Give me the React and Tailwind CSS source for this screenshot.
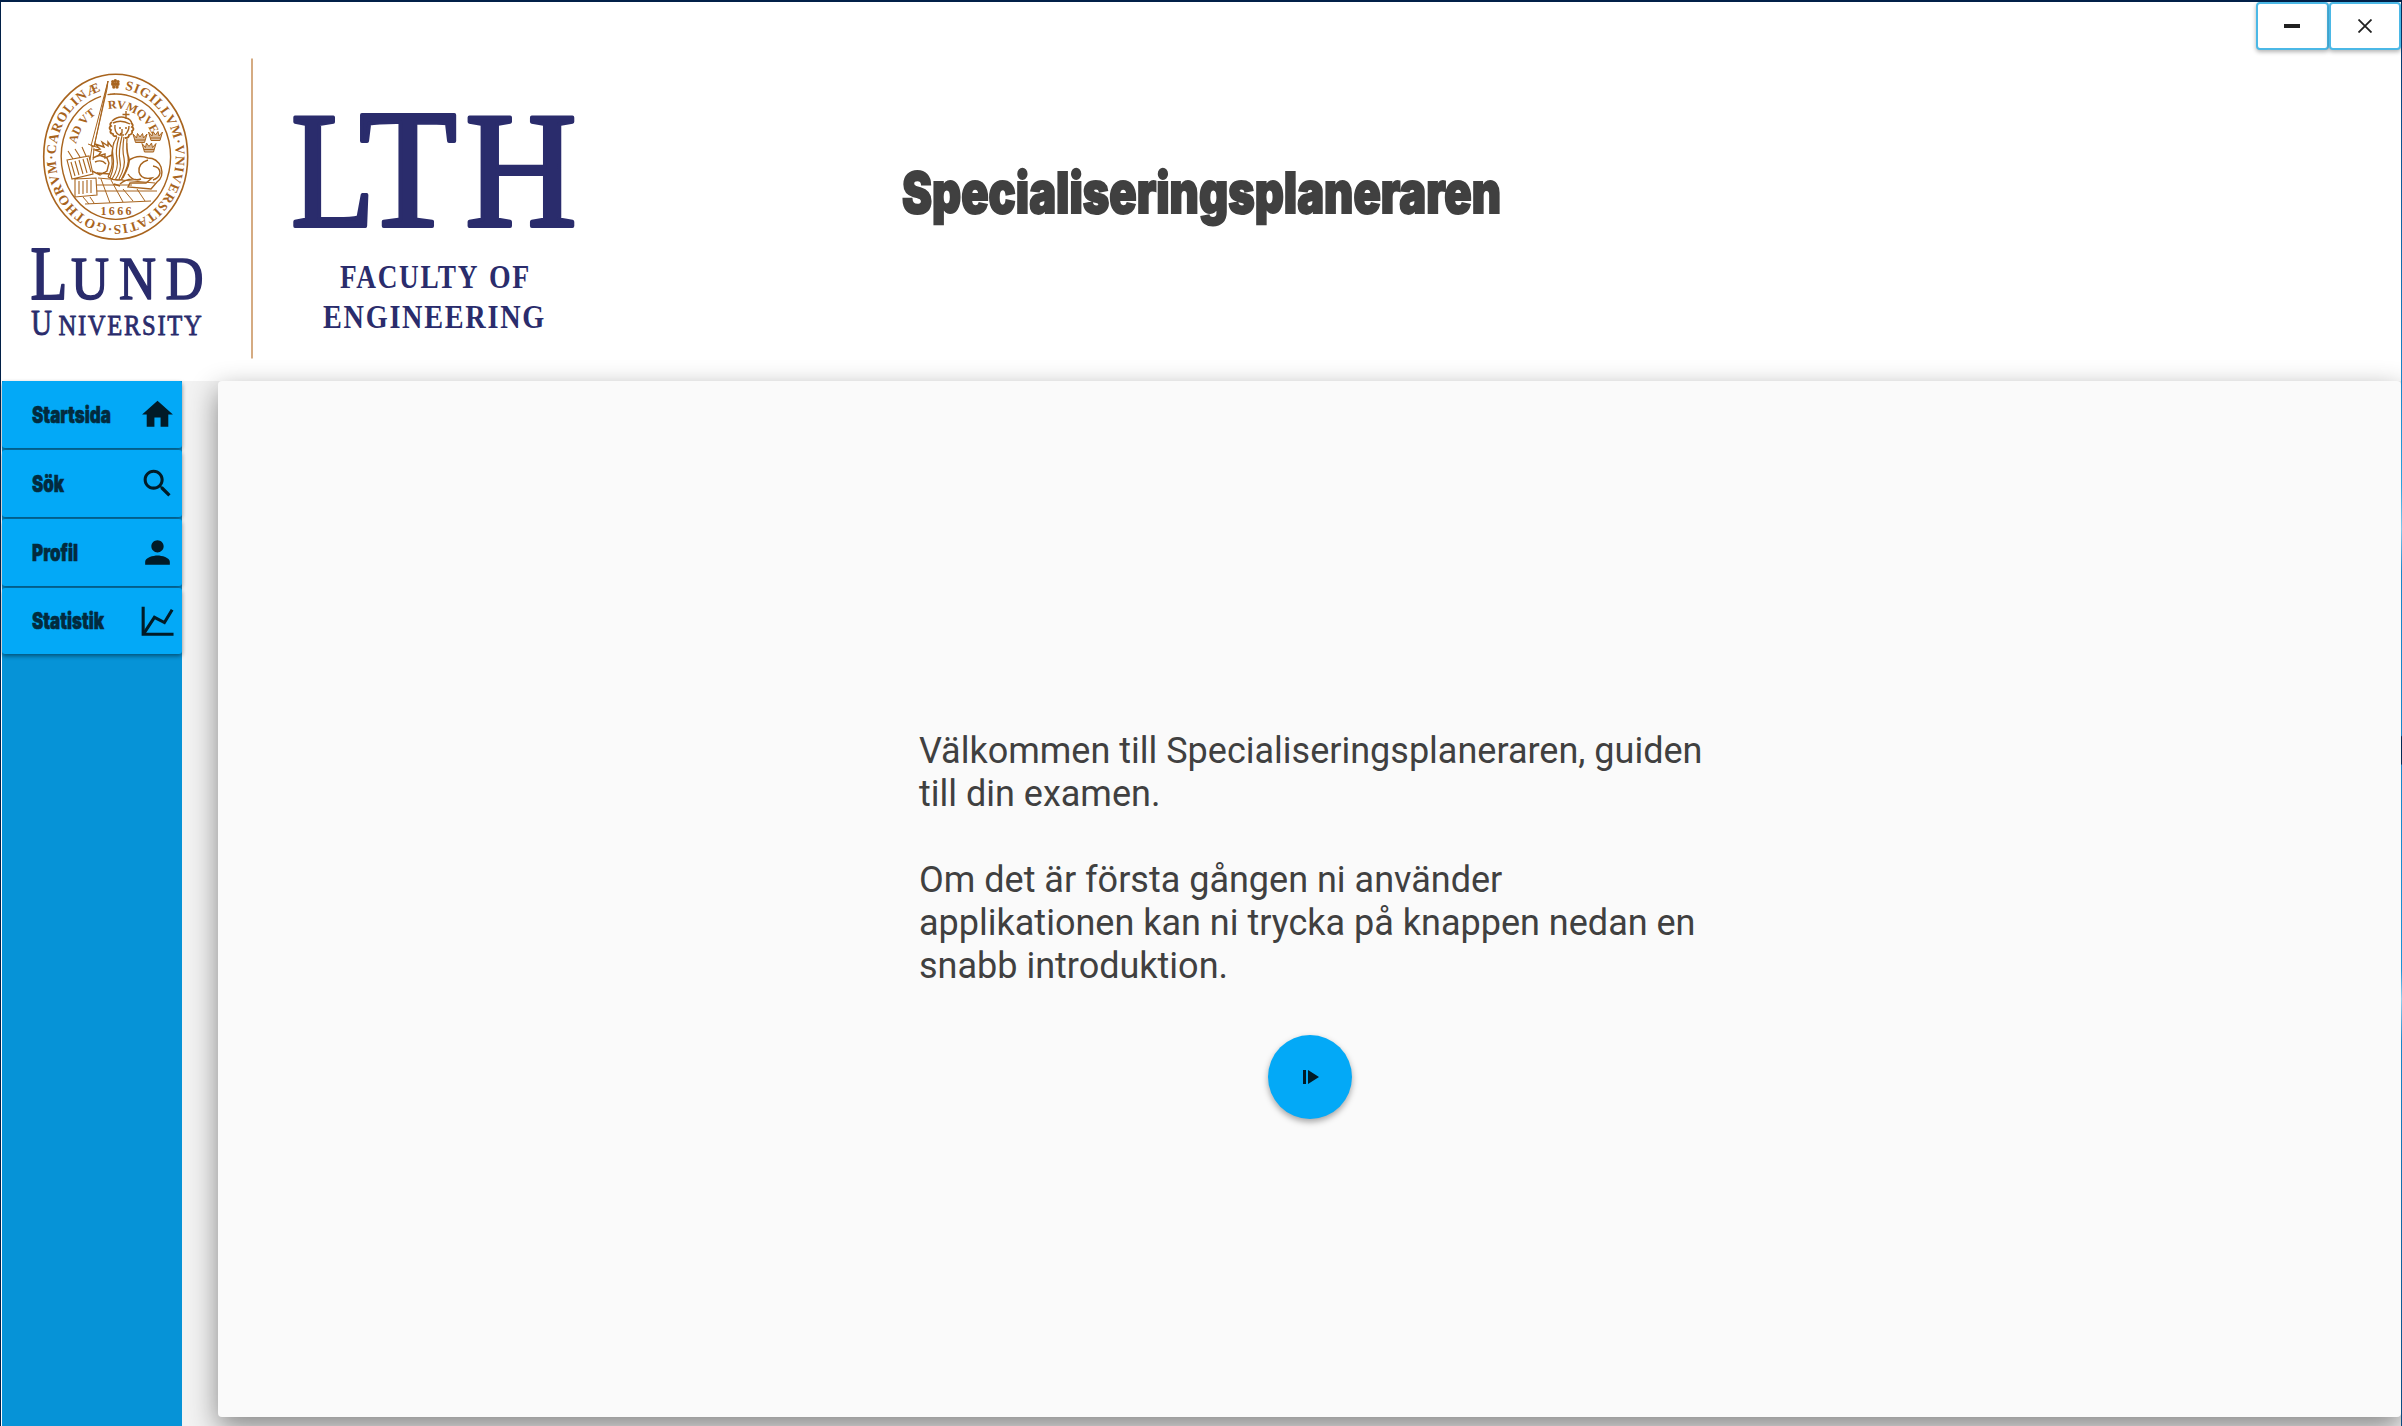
const NAV = [
  {
    label: "Startsida",
    width: 79,
    icon: <path d="M10 20v-6h4v6h5v-8h3L12 3 2 12h3v8z" />,
  },
  {
    label: "Sök",
    width: 32,
    icon: (
      <path d="M15.5 14h-.79l-.28-.27C15.41 12.59 16 11.11 16 9.5 16 5.91 13.09 3 9.5 3S3 5.91 3 9.5 5.91 16 9.5 16c1.61 0 3.09-.59 4.23-1.57l.27.28v.79l5 4.99L20.49 19l-4.99-5zm-6 0C7.01 14 5 11.99 5 9.5S7.01 5 9.5 5 14 7.01 14 9.5 11.99 14 9.5 14z" />
    ),
  },
  {
    label: "Profil",
    width: 46,
    icon: <path d="M12 12c2.21 0 4-1.79 4-4s-1.79-4-4-4-4 1.79-4 4 1.79 4 4 4zm0 2c-2.67 0-8 1.34-8 4v2h16v-2c0-2.66-5.33-4-8-4z" />,
  },
  {
    label: "Statistik",
    width: 72,
    icon: (
      <g fill="none" stroke="currentColor" strokeWidth="2">
        <path d="M2.700 2.500v17.800h19.700" />
        <path d="M3.300 19.500 10 9.300l6.500 3.400 5-8.300" />
      </g>
    ),
  },
];

/* Heavy condensed lettering, fitted to a given width. */
function Condensed({ text, width, size, height, baseline, stroke, color }) {
  return (
    <svg width={width + 4} height={height} className="block overflow-visible">
      <text
        x="0"
        y={baseline}
        textLength={width}
        lengthAdjust="spacingAndGlyphs"
        fontFamily="Inter, Roboto, sans-serif"
        fontWeight="900"
        fontSize={size}
        fill={color}
        stroke={color}
        strokeWidth={stroke}
      >
        {text}
      </text>
    </svg>
  );
}

function Fit({ x, y, w, size, children, stroke = 0, weight = 400, spacing = 0 }) {
  return (
    <text
      x={x}
      y={y}
      textLength={w}
      lengthAdjust="spacingAndGlyphs"
      letterSpacing={spacing}
      fontSize={size}
      fontWeight={weight}
      stroke="#2a2c6c"
      strokeWidth={stroke}
      strokeLinejoin="round"
    >
      {children}
    </text>
  );
}

function Crown({ x, y }) {
  return (
    <path
      transform={`translate(${x} ${y})`}
      d="M-7-4-4.500 4.500h9L7-4 3.500 0 2.500-4.500 0-1-2.500-4.500-3.500 0zM-5 2h10"
      fill="#a8641e"
      fillOpacity=".45"
    />
  );
}

function Seal() {
  return (
    <g fill="none" stroke="#a8641e" strokeWidth="1">
      <defs>
        <path id="outer" d="M115.700 89a60 68 0 0 1 0 136a60 68 0 0 1 0-136" />
        <path id="inner" d="M75.500 147A41 48 0 0 1 155.900 147" />
      </defs>
      <ellipse cx="115.700" cy="156.700" rx="72" ry="82.500" strokeWidth="1.600" />
      <path d="M101 96.300A54.700 62.700 0 1 0 110 94.300M107.500 94.600A54.700 62.700 0 0 1 115 94" strokeWidth="1.400" />
      <g stroke="none" fill="#a8641e" fontFamily="'Liberation Serif', serif" fontWeight="700">
        <text fontSize="13.500">
          <textPath href="#outer" startOffset="9" textLength="378" lengthAdjust="spacing">
            SIGILLVM·VNIVERSITATIS·GOTHORVM·CAROLINÆ
          </textPath>
        </text>
        <text fontSize="12">
          <textPath href="#inner" startOffset="3">AD VT</textPath>
        </text>
        <text fontSize="12">
          <textPath href="#inner" startOffset="53">RVMQVE</textPath>
        </text>
        <text x="100.500" y="215" fontSize="12" textLength="31">1666</text>
      </g>
      <g fill="#a8641e" stroke="none">
        <circle cx="115.300" cy="80.700" r="1.700" /><circle cx="112.900" cy="84" r="1.900" />
        <circle cx="117.800" cy="84" r="1.900" /><circle cx="113.800" cy="87" r="1.700" /><circle cx="115.300" cy="84" r="2" />
        <circle cx="117" cy="87" r="1.700" /><circle cx="112.700" cy="81.500" r="1.600" /><circle cx="118" cy="81.500" r="1.600" />
      </g>
      <path d="M108 81 91 146l3 1zM108 81l-1 8L94 147M88 144l11 4M92 147l-2 13M94 148l-1 12" strokeWidth="1" fill="#fff" />
      {/* crowned head with curled hair */}
      <path d="M126 111v8M122.500 114.500h7M112 121q7-6 14-3 5 1 6 6M113 123q8-4 17 1M115 125q-1 7 4 10M129 126q0 5-4 9M119 128h2M125 128h2M122 129v4l-2 1M119 135h5" strokeWidth="1.400" />
      <path d="M112 122q-3 2-1 4-3 2 0 4-2 3 2 4 0 3 4 2M131 123q3 2 1 4 3 2 0 4 1 3-3 4 0 3-4 3" strokeWidth="1.800" />
      <path d="M117 137q-6 9-4 19t-3 22M119 137q-4 13-2 22t-5 20M122 136q-4 16-2 25t-5 19M124 137q-2 13 0 21t-5 21M127 139q-1 11 1 18t-7 23M127 143q0 10 2 15t-6 20M114 142q-3 11-2 18t-4 17M108 177q7 5 15 2" strokeWidth="1.200" />
      {/* paws */}
      <path d="M112 147l-4-5 0 4-6-4 2 5-9-3 5 5-5 1 6 2-3 4 7-2 0 4 7-3M93 158l6-3 8 3 2 5-2 8-7 4-8-4M95 162q7-3 11 2M97 173l13 1" strokeWidth="1.400" />
      {/* body, hind leg and tail */}
      <path d="M128 161q9-7 20-3 9 0 13 9 3 10-4 15l-6 7-23-2 2-4 16 0 6-5q-11 2-13-6-1-9 9-12M128 174q5 8 13 5M153 166q7 1 7 7-1 5-7 7M120 184q8-7 18-4M114 184l6 2" strokeWidth="1.400" />
      {/* books */}
      <path d="M67 160l22-4 4 18-21 5zM71 162l4 14M75 161l4 14M79 160l4 14M83 159l4 14M87 158l4 14M68 151l5 8M75 149l5 8M82 147l4 9M75 179v18l22-2-1-17zM79 181v13M83 181v13M87 180v13M91 180v13" strokeWidth="1.100" />
      {/* tiled floor */}
      <path d="M98 178l57 5M97 191h60M85 204l66-3M83 197l6 7M90 197l4 6M101 179l9 24M111 180l12 22M123 189l10 12M137 189l8 12M97 185h35" />
      <g strokeWidth="1">
        <Crown x={140} y={138} />
        <Crown x={155.500} y={136} />
        <Crown x={149} y={147.500} />
      </g>
    </g>
  );
}

function Logo() {
  return (
    <svg width="600" height="378" viewBox="0 0 600 378" className="block shrink-0">
      <Seal />
      <g fill="#2a2c6c" fontFamily="'Liberation Serif', serif">
        <Fit x={30.500} y={299} w={37} size={77} stroke={2}>L</Fit>
        <Fit x={71} y={299} w={38} size={62} stroke={1.600}>U</Fit>
        <Fit x={119} y={299} w={37} size={62} stroke={1.600}>N</Fit>
        <Fit x={165.500} y={299} w={38} size={62} stroke={1.600}>D</Fit>
        <Fit x={31} y={334.500} w={21} size={36} stroke={0.800}>U</Fit>
        <Fit x={58.500} y={334.500} w={145} size={29} stroke={0.800} spacing={2}>NIVERSITY</Fit>
        <Fit x={291} y={226} w={84} size={165} stroke={4}>L</Fit>
        <Fit x={359} y={226} w={98} size={170} stroke={4}>T</Fit>
        <Fit x={465} y={226} w={112} size={165} stroke={4}>H</Fit>
        <Fit x={340} y={288} w={139} size={33} weight={700} spacing={2}>FACULTY</Fit>
        <Fit x={489} y={288} w={42} size={33} weight={700} spacing={2}>OF</Fit>
        <Fit x={323} y={328} w={223} size={33} weight={700} spacing={2}>ENGINEERING</Fit>
      </g>
      <rect x="251" y="58.500" width="2" height="300" fill="#d5ab82" />
    </svg>
  );
}

export default function App() {
  return (
    <div className="flex h-[1426px] w-[2402px] overflow-hidden border-t-2 border-l border-[#012048] bg-white font-[Roboto,sans-serif]">
      <div className="flex min-w-0 flex-1 flex-col">
        <header className="flex h-[379px] shrink-0">
          <div className="-mt-0.5 -ml-px w-[902px]"><Logo /></div>
          <h1 className="mt-[149px] w-[602px]">
            <Condensed text="Specialiseringsplaneraren" width={599} size={57} height={70} baseline={61.500} stroke={2} color="#404040" />
          </h1>
          <div className="ml-auto flex h-12">
            <button className="flex w-[72.5px] items-center justify-center rounded border-2 border-[#4bb8e6] bg-white shadow-[0_2px_4px_rgba(0,0,0,0.3)]">
              <span className="h-1 w-4 bg-[#212121]" />
            </button>
            <button className="flex w-[72.5px] items-center justify-center rounded border-2 border-[#4bb8e6] bg-white shadow-[0_2px_4px_rgba(0,0,0,0.3)]">
              <svg width="14" height="14" viewBox="0 0 14 14" stroke="#212121" strokeWidth="1.800"><path d="M.5.5l13 13M13.500.5l-13 13" /></svg>
            </button>
          </div>
        </header>
        <div className="flex min-h-0 flex-1">
          <nav className="relative z-10 ml-px flex w-[180px] shrink-0 flex-col gap-0.5 bg-[#0693d7]">
            {NAV.map((n) => (
              <button key={n.label} className="flex h-[67px] items-center justify-between rounded-[3px] bg-[#03a9f7] pr-1.5 pl-[30px] shadow-[0_2px_4px_rgba(0,0,0,0.45)] last:h-[66px]">
                <Condensed text={n.label} width={n.width} size={23} height={20} baseline={18} stroke={0.600} color="#022b3e" />
                <svg width="37" height="37" viewBox="0 0 24 24" fill="currentColor" className="text-[#011b27]">{n.icon}</svg>
              </button>
            ))}
          </nav>
          <main className="flex flex-1 bg-[#f2f2f2] pb-[9px] pl-9">
            <section className="flex flex-1 flex-col items-center rounded bg-[#fafafa] pt-[348.6px] shadow-[0_10px_28px_rgba(0,0,0,0.45)]">
              <div className="ml-px w-[782px] text-[36px] leading-[43.200px] whitespace-nowrap text-[#404040]">
                <p>Välkommen till Specialiseringsplaneraren, guiden<br />till din examen.</p>
                <p className="mt-[43px]">Om det är första gången ni använder<br />applikationen kan ni trycka på knappen nedan en<br />snabb introduktion.</p>
              </div>
              <button className="mt-[46.4px] flex size-[84px] items-center justify-center rounded-full bg-[#03a9f7] shadow-[0_3px_6px_rgba(0,0,0,0.35)]">
                <svg width="16" height="14" viewBox="0 0 16 14" fill="#011b27" className="ml-0.5"><path d="M0 0h3v14H0zM5 0l11 7-11 7z" /></svg>
              </button>
            </section>
          </main>
        </div>
      </div>
      <div className="w-px shrink-0 bg-[linear-gradient(#012a57_0%,#0b4f8c_8%,#1787cc_27%,#2aa3e0_34%,#7cc8ee_37%,#1787cc_40%,#1787cc_51.500%,#012a57_51.600%,#012a57_53.500%,#1787cc_53.600%,#1a93d8_68%,#8fd0f0_70%,#1787cc_73%,#0b4a80_100%)]" />
    </div>
  );
}
